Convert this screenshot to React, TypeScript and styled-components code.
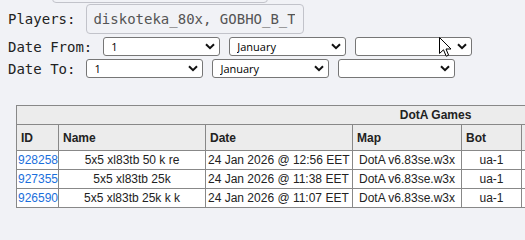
import React from "react";
import styled, {createGlobalStyle} from "styled-components";

const GlobalStyle = createGlobalStyle`
    html, body {
        margin: 0;
        overflow: hidden;
        background: #f1f2f6;
    }
`;

type GameType = {
    id: string;
    name: string;
    date: string;
    map: string;
    bot: string;
};

const games: GameType[] = [
    {id: "928258", name: "5x5 xl83tb 50 k re", date: "24 Jan 2026 @ 12:56 EET", map: "DotA v6.83se.w3x", bot: "ua-1"},
    {id: "927355", name: "5x5 xl83tb 25k", date: "24 Jan 2026 @ 11:38 EET", map: "DotA v6.83se.w3x", bot: "ua-1"},
    {id: "926590", name: "5x5 xl83tb 25k k k", date: "24 Jan 2026 @ 11:07 EET", map: "DotA v6.83se.w3x", bot: "ua-1"},
];

const columns = [
    {title: "ID", width: 42},
    {title: "Name", width: 147},
    {title: "Date", width: 147},
    {title: "Map", width: 109},
    {title: "Bot", width: 60},
    {title: "Duration", width: 110},
    {title: "Creator", width: 223},
];

const days = Array.from({length: 31}, (_, i) => String(i + 1));
const months = ["January", "February", "March", "April", "May", "June", "July",
    "August", "September", "October", "November", "December"];

const Chevron = () => (
    <svg width="10" height="7" viewBox="0 0 10 7">
        <path d="M1 1.2 L5 5.2 L9 1.2" fill="none" stroke="#111" strokeWidth="2"/>
    </svg>
);

const MouseCursor = () => (
    <Cursor width="13" height="21" viewBox="0 0 13 21">
        <path d="M0.5 0.5 L0.5 16.5 L4.5 12.8 L7.2 19.2 L9.6 18.2 L7 12 L12 12 Z"
              fill="#fff" stroke="#000" strokeWidth="1"/>
    </Cursor>
);

const DateSelect = ({options, value, hovered}: { options: string[]; value?: string; hovered?: boolean }) => (
    <SelectBox>
        <Select defaultValue={value ?? ""}>
            {value === undefined && <option value=""></option>}
            {options.map(o => <option key={o} value={o}>{o}</option>)}
        </Select>
        <ArrowSlot><Chevron/></ArrowSlot>
        {hovered && <MouseCursor/>}
    </SelectBox>
);

const DateRow = ({label, hovered}: { label: string; hovered?: boolean }) => (
    <Row>
        <Label>{label}</Label>
        <DateSelect options={days} value="1"/>
        <DateSelect options={months} value="January"/>
        <DateSelect options={["2024", "2025", "2026"]} hovered={hovered}/>
    </Row>
);

export default function App() {
    return (
        <Page>
            <GlobalStyle/>
            <Form>
                {/* the field above Players is scrolled out of view, only its bottom edge shows */}
                <TopStrip>
                    <Field $width={216}/>
                </TopStrip>
                <Row>
                    <Label>Players:</Label>
                    <Field><FieldText>diskoteka_80x, GOBHO_B_TEPTO</FieldText></Field>
                </Row>
                <DateRow label="Date From:" hovered/>
                <DateRow label="Date To:"/>
            </Form>

            <Games>
                <colgroup>
                    {columns.map(c => <col key={c.title} style={{width: c.width}}/>)}
                </colgroup>
                <thead>
                <tr>
                    <Caption colSpan={columns.length}>DotA Games</Caption>
                </tr>
                <tr>
                    {columns.map(c => <Head key={c.title}>{c.title}</Head>)}
                </tr>
                </thead>
                <tbody>
                {games.map(g => (
                    <tr key={g.id}>
                        <Cell><IdLink href="#">{g.id}</IdLink></Cell>
                        <Cell $center>{g.name}</Cell>
                        <Cell>{g.date}</Cell>
                        <Cell $center>{g.map}</Cell>
                        <Cell $center>{g.bot}</Cell>
                        <Cell $center>40:12</Cell>
                        <Cell $center>diskoteka_80x</Cell>
                    </tr>
                ))}
                </tbody>
            </Games>
        </Page>
    );
}

const Page = styled.div`
    padding: 0 8px;
    font-family: "DejaVu Sans Mono", monospace;
    font-size: 14px;
    color: #222;
`;

const Form = styled.div`
    display: flex;
    flex-direction: column;
    gap: 3px;
`;

const TopStrip = styled.div`
    display: flex;
    align-items: flex-end;
    height: 3px;
    margin-bottom: -2px;
    padding-left: 44px;
    overflow: hidden;
`;

const Row = styled.div`
    display: flex;
    align-items: center;
    gap: 9px;
`;

const Label = styled.span`
    margin-right: 2px;
    white-space: pre;
`;

const Field = styled.div<{ $width?: number }>`
    box-sizing: border-box;
    flex: none;
    width: ${p => p.$width ?? 218}px;
    height: 30px;
    padding: 0 8px 0 6px;
    border: 1px solid #c2c3ca;
    border-radius: 4px;
    font-size: 14px;
    line-height: 28px;
    color: #555;
`;

const FieldText = styled.span`
    display: block;
    white-space: nowrap;
    overflow: hidden;
`;

const SelectBox = styled.div`
    position: relative;
    width: 117px;
    height: 19px;
`;

const Select = styled.select`
    appearance: none;
    box-sizing: border-box;
    width: 100%;
    height: 100%;
    padding: 0 20px 0 7px;
    border: 1px solid #767676;
    border-radius: 3px;
    background: #fff;
    font-family: "Open Sans", "Noto Sans", sans-serif;
    font-size: 11px;
    color: #000;
    outline: none;
`;

const ArrowSlot = styled.span`
    position: absolute;
    right: 5px;
    top: 6px;
    display: flex;
    pointer-events: none;
`;

const Cursor = styled.svg`
    position: absolute;
    left: 84px;
    top: 0;
    pointer-events: none;
`;

const Games = styled.table`
    margin: 27px 0 0 8px;
    width: 838px;
    border-collapse: collapse;
    table-layout: fixed;
    font-family: "Liberation Sans", Arial, sans-serif;
    font-size: 12px;
    line-height: 14px;
    color: #222;
`;

const Caption = styled.th`
    padding: 2px 4px;
    border: 1px solid #888;
    background: #ececec;
    font-weight: bold;
    text-align: center;
`;

const Head = styled.th`
    padding: 6px 4px 5px;
    border: 1px solid #888;
    background: #ececec;
    font-weight: bold;
    text-align: left;
`;

const Cell = styled.td<{ $center?: boolean }>`
    padding: 2px 2px;
    border: 1px solid #888;
    background: #fff;
    text-align: ${p => (p.$center ? "center" : "left")};
    white-space: nowrap;
    overflow: hidden;
`;

const IdLink = styled.a`
    margin-left: -1px;
    color: #1a6fdc;
    text-decoration: none;
`;
